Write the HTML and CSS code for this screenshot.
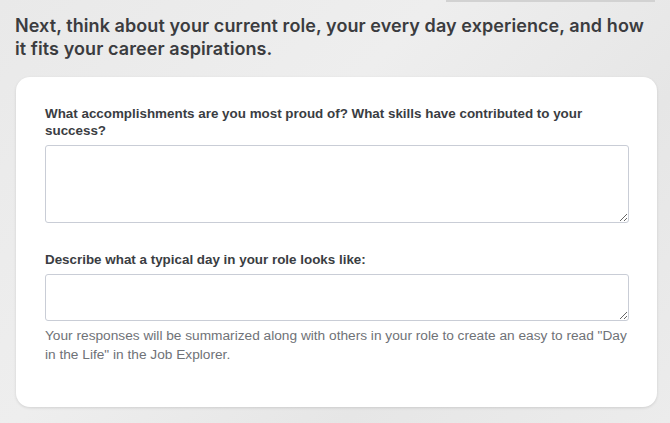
FILE: index.html
```html
<!DOCTYPE html>
<html>
<head>
<meta charset="utf-8">
<link rel="stylesheet" href="styles.css">
</head>
<body>
<div class="page">
  <div class="topbar"></div>
  <h1 class="heading">Next, think about your current role, your every day experience, and how it fits your career aspirations.</h1>
  <div class="card">
    <div class="field">
      <label class="label">What accomplishments are you most proud of? What skills have contributed to your success?</label>
      <textarea class="input tall"></textarea>
    </div>
    <div class="field">
      <label class="label">Describe what a typical day in your role looks like:</label>
      <textarea class="input short"></textarea>
      <p class="help">Your responses will be summarized along with others in your role to create an easy to read "Day in the Life" in the Job Explorer.</p>
    </div>
  </div>
</div>
</body>
</html>
```
FILE: styles.css
```css
html, body {
  margin: 0;
  padding: 0;
}
body {
  width: 670px;
  height: 423px;
  overflow: hidden;
  background: linear-gradient(135deg, #e9e9e9 0%, #eeeeee 40%, #e6e6e6 70%, #ececec 100%);
}
.page {
  position: relative;
  height: 423px;
  padding: 0 13px 0 16px;
  box-sizing: border-box;
  display: flex;
  flex-direction: column;
}
.topbar {
  position: absolute;
  left: 446px;
  top: 0;
  width: 209px;
  height: 2px;
  background: #d2d2d2;
}
.heading {
  margin: 14px 12px 0 -1px;
  font-family: Inter, "Noto Sans", sans-serif;
  font-weight: 600;
  font-size: 18px;
  line-height: 23px;
  color: #3b3c3f;
  letter-spacing: 0.08px;
}
.card {
  margin-top: 17px;
  background: #ffffff;
  border-radius: 14px;
  box-shadow: 0 1px 3px rgba(0,0,0,0.12);
  padding: 28px 28px 44px 29px;
  height: 330px;
  box-sizing: border-box;
}
.field {
  display: flex;
  flex-direction: column;
}
.field + .field {
  margin-top: 28px;
}
.label {
  font-family: "Liberation Sans", Arial, sans-serif;
  font-weight: 700;
  font-size: 13.4px;
  line-height: 17px;
  color: #3a3d42;
  margin-bottom: 6px;
}
.input {
  display: block;
  width: 100%;
  box-sizing: border-box;
  border: 1px solid #c9cdd6;
  border-radius: 3px;
  margin: 0;
  padding: 6px 8px;
  font-family: "Liberation Sans", Arial, sans-serif;
  font-size: 13px;
  background: #fff;
}
.tall {
  height: 78px;
}
.short {
  height: 47px;
}
.help {
  margin: 5px 0 0;
  font-family: "Liberation Sans", Arial, sans-serif;
  font-size: 13.7px;
  line-height: 19px;
  color: #6f7277;
}
```
